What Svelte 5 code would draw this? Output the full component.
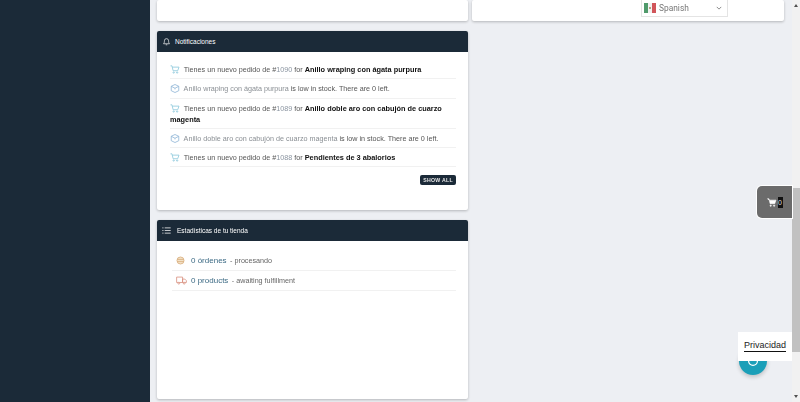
<script>
  const notifications = [
    { type: "order", num: "1090", name: "Anillo wraping con ágata purpura" },
    { type: "stock", name: "Anillo wraping con ágata purpura" },
    { type: "order", num: "1089", name: "Anillo doble aro con cabujón de cuarzo magenta" },
    { type: "stock", name: "Anillo doble aro con cabujón de cuarzo magenta" },
    { type: "order", num: "1088", name: "Pendientes de 3 abalorios" },
  ];
</script>

<div class="page">
  <aside class="sidebar"></aside>

  <main class="main">
    <div class="col left">
      <section class="card stub"></section>

      <section class="card notif">
        <header class="card-head">
          <svg class="head-icon" viewBox="0 0 12 12" fill="none" stroke="#fff" stroke-width="0.9">
            <path d="M2 9c1-1 1.2-2 1.2-4a2.8 2.8 0 0 1 5.6 0c0 2 .2 3 1.2 4z" />
            <path d="M5 10.4h2" />
          </svg>
          <span>Notificaciones</span>
        </header>
        <ul class="list">
          {#each notifications as n}
            <li>
              {#if n.type === "order"}
                <svg class="ico" viewBox="0 0 12 11" fill="none" stroke="#8cc8dc" stroke-width="1">
                  <path d="M.5 1h1.8l1.4 6h5.6l1.6-4.4H2.8" />
                  <circle cx="4.4" cy="9.2" r=".8" />
                  <circle cx="8.6" cy="9.2" r=".8" />
                </svg>
                Tienes un nuevo pedido de #<span class="num">{n.num}</span> for <b>{n.name}</b>
              {:else}
                <svg class="ico" viewBox="0 0 12 11" fill="none" stroke="#8fb6d6" stroke-width="1">
                  <path d="M6 .6l4.6 2.2v5.4L6 10.4 1.4 8.2V2.8z" />
                  <path d="M1.4 2.8L6 5.2l4.6-2.4M6 5.2v1.4" />
                </svg>
                <span class="faded">{n.name}</span> is low in stock. There are 0 left.
              {/if}
            </li>
          {/each}
        </ul>
        <div class="actions"><button class="show-all">SHOW ALL</button></div>
      </section>

      <section class="card stats">
        <header class="card-head">
          <svg class="head-icon" viewBox="0 0 12 12" fill="none" stroke="#fff" stroke-width="1">
            <path d="M3.6 2.5h8M3.6 6h8M3.6 9.5h8M.4 2.5h1.6M.4 6h1.6M.4 9.5h1.6" />
          </svg>
          <span class="stats-title">Estadísticas de tu tienda</span>
        </header>
        <ul class="stat-list">
          <li>
            <svg class="stat-ico" viewBox="0 0 10 10" fill="#f3e2c8" stroke="#d9ad7c" stroke-width="0.9">
              <circle cx="5" cy="5" r="3.9" />
              <path d="M1.4 3.8h7.2M1.4 6.2h7.2" />
            </svg>
            <a href="#orders">0 órdenes</a>
            <span class="stat-sub">- procesando</span>
          </li>
          <li>
            <svg class="stat-ico truck" viewBox="0 0 12 10" fill="none" stroke="#d98f7e" stroke-width="0.9">
              <path d="M.6 1.2h6.6v6H.6zM7.2 3.4h2.4l1.8 1.8v2H7.2z" />
              <circle cx="3" cy="8" r="1" fill="#fff" />
              <circle cx="9" cy="8" r="1" fill="#fff" />
            </svg>
            <a href="#products">0 products</a>
            <span class="stat-sub">- awaiting fulfillment</span>
          </li>
        </ul>
      </section>
    </div>

    <div class="col">
      <section class="card stub lang-card">
        <div class="lang">
          <svg class="flag" viewBox="0 0 12 10">
            <rect width="4" height="10" fill="#4f9a6b" />
            <rect x="4" width="4" height="10" fill="#f2f2f2" />
            <rect x="8" width="4" height="10" fill="#d1555a" />
            <circle cx="6" cy="5" r="1" fill="#9b8a5a" />
          </svg>
          <span>Spanish</span>
          <svg class="chev" viewBox="0 0 8 5" fill="none" stroke="#666" stroke-width="1">
            <path d="M1 1l3 3 3-3" />
          </svg>
        </div>
      </section>
    </div>
  </main>

  <div class="scrollbar">
    <span class="arrow up"></span>
    <div class="thumb"></div>
    <span class="arrow down"></span>
  </div>

  <div class="cart">
    <svg viewBox="0 0 12 11" fill="#fff" stroke="#fff" stroke-width="0.7">
      <path d="M.5 1h1.8l1.4 6h5.6l1.6-4.4H2.8z" />
      <circle cx="4.4" cy="9.4" r=".8" />
      <circle cx="8.6" cy="9.4" r=".8" />
    </svg>
    <span class="badge">0</span>
  </div>

  <div class="chat">
    <svg viewBox="0 0 12 12" fill="none" stroke="#fff" stroke-width="1.2">
      <circle cx="6" cy="6" r="4.4" />
    </svg>
  </div>
  <div class="privacy"><span>Privacidad</span></div>
</div>

<style>
  :global(body) {
    margin: 0;
  }
  .page {
    position: relative;
    display: flex;
    width: 800px;
    height: 402px;
    overflow: hidden;
    background: #edeff3;
    font-family: "Liberation Sans", Arial, sans-serif;
  }
  .sidebar {
    width: 150px;
    flex: none;
    background: #1b2a38;
  }
  .main {
    flex: 1;
    display: flex;
    gap: 4px;
    padding: 0 8px 0 7px;
    min-width: 0;
    opacity: 0.999;
  }
  .col {
    flex: 1;
    min-width: 0;
  }
  .col.left {
    flex: none;
    width: 311px;
  }
  .card {
    background: #fff;
    border-radius: 2px;
    box-shadow: 0 1px 3px rgba(0, 0, 0, 0.25);
    margin-bottom: 10px;
  }
  .stub {
    height: 21px;
  }
  .lang-card {
    display: flex;
    justify-content: flex-end;
    padding-right: 56px;
  }
  .lang {
    display: flex;
    align-items: center;
    width: 87px;
    height: 17px;
    box-sizing: border-box;
    padding: 0 5px 0 2px;
    border: 1px solid #e4e4e4;
    border-top: 0;
    background: #fff;
    color: #777;
    font-family: Roboto, sans-serif;
    font-size: 8.4px;
  }
  .flag {
    width: 12px;
    height: 10px;
    margin-right: 3px;
  }
  .chev {
    width: 6px;
    height: 4px;
    margin-left: auto;
  }
  .notif {
    height: 179px;
  }
  .stats {
    height: 179px;
  }
  .card-head {
    display: flex;
    align-items: center;
    height: 21px;
    padding-left: 5px;
    background: #1b2a38;
    border-radius: 2px 2px 0 0;
    color: #fff;
    font-size: 6.5px;
  }
  .head-icon {
    width: 9px;
    height: 9px;
    margin-right: 4px;
  }
  .stats-title {
    margin-left: 2px;
  }
  .list {
    list-style: none;
    margin: 0;
    padding: 8px 12px 0 13px;
    font-size: 7.2px;
    line-height: 11px;
    color: #555;
  }
  .list li {
    padding: 4px 0 3.3px;
    border-bottom: 1px solid #f1f1f1;
  }
  .ico {
    width: 10px;
    height: 9px;
    margin-right: 2px;
    vertical-align: -2px;
  }
  .faded {
    color: #8a8f94;
  }
  .num {
    color: #8a94a0;
  }
  .list b {
    color: #111;
    font-size: 7.35px;
  }
  .actions {
    display: flex;
    justify-content: flex-end;
    padding: 8px 12px 0 0;
  }
  .show-all {
    height: 10px;
    padding: 0 3px;
    border: 0;
    border-radius: 2px;
    background: #1b2a38;
    color: #e8e8e8;
    font-family: "Liberation Sans", sans-serif;
    font-size: 5.2px;
    font-weight: 700;
    letter-spacing: 0.3px;
  }
  .stat-list {
    list-style: none;
    margin: 0;
    padding: 10px 12px 0 15px;
  }
  .stat-list li {
    display: flex;
    align-items: center;
    box-sizing: border-box;
    height: 20px;
    border-bottom: 1px solid #f1f1f1;
  }
  .stat-ico {
    width: 9px;
    height: 9px;
    margin-right: 6px;
    margin-left: 4px;
  }
  .truck {
    width: 11px;
    margin-right: 4px;
  }
  .stat-list a {
    color: #3d6b85;
    font-size: 8px;
    text-decoration: none;
    margin-right: 3.5px;
  }
  .stat-sub {
    color: #666;
    font-size: 7.2px;
  }
  .scrollbar {
    width: 8px;
    flex: none;
    position: relative;
    background: #f1f1f1;
  }
  .thumb {
    position: absolute;
    top: 188px;
    left: 0;
    width: 8px;
    height: 164px;
    background: #c1c1c1;
  }
  .arrow {
    position: absolute;
    left: 2px;
    width: 0;
    height: 0;
    border-left: 2px solid transparent;
    border-right: 2px solid transparent;
  }
  .arrow.up {
    top: 4px;
    border-bottom: 3px solid #505050;
  }
  .arrow.down {
    bottom: 4px;
    border-top: 3px solid #505050;
  }
  .cart {
    position: absolute;
    left: 757px;
    top: 186px;
    width: 35px;
    height: 32px;
    display: flex;
    align-items: center;
    justify-content: center;
    gap: 1px;
    background: #6b6b6b;
    border-radius: 5px 0 0 5px;
    box-shadow: 0 0 0 1px #fff;
  }
  .cart svg {
    width: 10px;
    height: 9px;
  }
  .badge {
    width: 5px;
    height: 11px;
    background: #111;
    color: #ddd;
    font-size: 7px;
    line-height: 11px;
    text-align: center;
  }
  .chat {
    position: absolute;
    left: 739px;
    top: 347px;
    width: 28px;
    height: 28px;
    border-radius: 50%;
    background: #1b9fb8;
    box-shadow: 0 2px 4px rgba(0, 0, 0, 0.2);
    display: flex;
    align-items: center;
    justify-content: center;
  }
  .chat svg {
    width: 12px;
    height: 12px;
  }
  .privacy {
    position: absolute;
    left: 738px;
    top: 332px;
    width: 54px;
    height: 29px;
    display: flex;
    align-items: center;
    justify-content: center;
    background: #fff;
    color: #222;
    font-size: 9px;
    opacity: 0.999;
  }
  .privacy span {
    border-bottom: 1.5px solid #111;
    line-height: 11px;
    margin-top: -2px;
  }
</style>
